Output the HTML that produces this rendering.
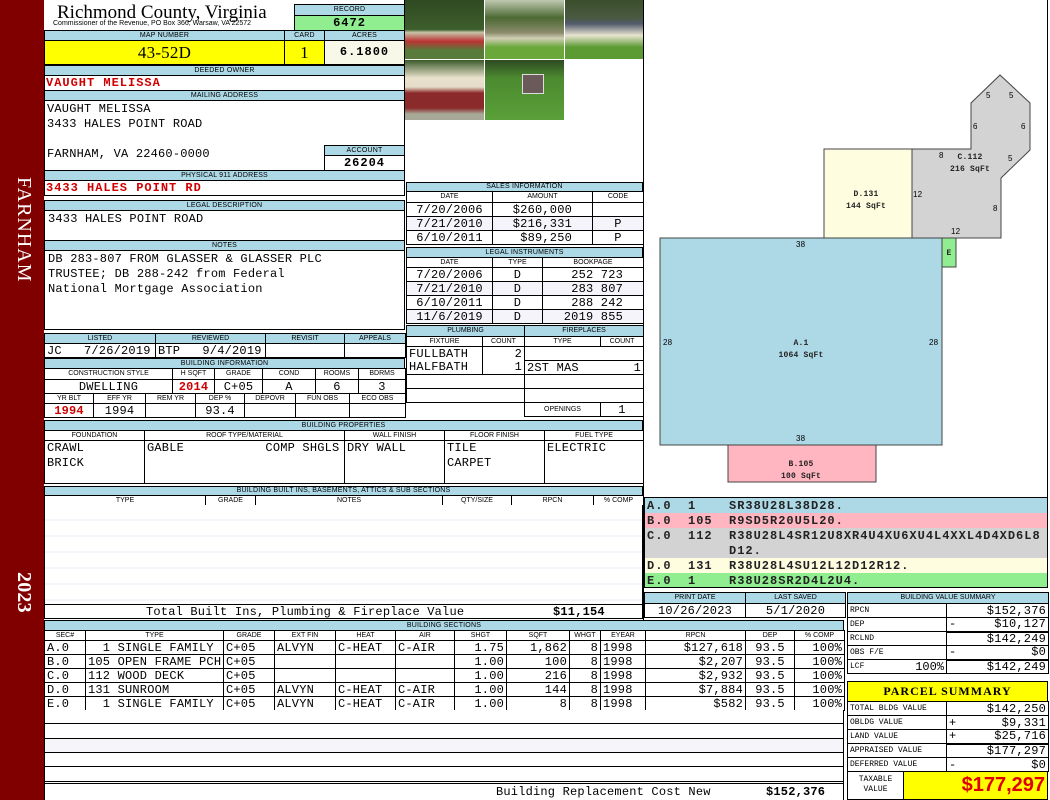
<!DOCTYPE html>
<html><head><meta charset="utf-8"><style>
*{margin:0;padding:0;box-sizing:border-box}
body{width:1050px;height:800px;position:relative;background:#fff;overflow:hidden;font-family:"Liberation Mono",monospace;font-size:12px;letter-spacing:.2px;color:#000}
.a{position:absolute}
.L{position:absolute;background:#add8e6;border:1px solid #000;font:7px/9px "Liberation Sans",sans-serif;text-align:center;letter-spacing:.2px}
table{position:absolute;border-collapse:collapse;table-layout:fixed}
td{border:1px solid #000;padding:0 2px;white-space:nowrap;overflow:hidden;line-height:12px}
td.h{font:7px/8px "Liberation Sans",sans-serif;text-align:center;background:#fff;letter-spacing:0}
tr.hb td{background:#add8e6}
.r{text-align:right}.c{text-align:center}
.red{color:#d00000;font-weight:bold}
.rot{position:absolute;color:#fff;font:20px "Liberation Serif",serif;transform:rotate(90deg);transform-origin:0 0;white-space:nowrap}
.sm{font-size:8px;letter-spacing:0}
</style></head><body>
<div class="a" style="left:0;top:0;width:44px;height:800px;background:#800000"></div>
<div class="rot" style="left:35px;top:177px;letter-spacing:1px">FARNHAM</div>
<div class="rot" style="left:35px;top:572px;font-weight:bold">2023</div>

<div class="a" style="left:57px;top:2px;font:19px 'Liberation Serif',serif;letter-spacing:0">Richmond County, Virginia</div>
<div class="a" style="left:53px;top:20px;font:7px 'Liberation Sans',sans-serif;letter-spacing:0">Commissioner of the Revenue, PO Box 366, Warsaw, VA 22572</div>
<div class="L" style="left:294px;top:4px;width:111px;height:12px">RECORD</div>
<div class="a c" style="left:294px;top:15px;width:111px;height:16px;background:#90ee90;border:1px solid #000;font-weight:bold;font-size:12px;line-height:14px;letter-spacing:1px">6472</div>
<div class="L" style="left:44px;top:30px;width:241px;height:11px">MAP NUMBER</div>
<div class="L" style="left:284px;top:30px;width:41px;height:11px">CARD</div>
<div class="L" style="left:324px;top:30px;width:81px;height:11px">ACRES</div>
<div class="a c" style="left:44px;top:40px;width:241px;height:25px;background:#ffff00;border:1px solid #000;font:17px/23px 'Liberation Serif',serif">43-52D</div>
<div class="a c" style="left:284px;top:40px;width:41px;height:25px;background:#ffff00;border:1px solid #000;font:17px/23px 'Liberation Serif',serif">1</div>
<div class="a c" style="left:324px;top:40px;width:81px;height:25px;background:#f8f8e8;border:1px solid #000;font-weight:bold;font-size:12px;line-height:23px;letter-spacing:1px">6.1800</div>
<div class="L" style="left:44px;top:65px;width:361px;height:11px">DEEDED OWNER</div>
<div class="a red" style="left:46px;top:76px;font-size:12px;letter-spacing:1px">VAUGHT MELISSA</div>
<div class="a" style="left:44px;top:75px;width:361px;height:16px;border:1px solid #000;border-top:0"></div>
<div class="L" style="left:44px;top:90px;width:361px;height:11px">MAILING ADDRESS</div>
<div class="a" style="left:44px;top:100px;width:361px;height:71px;border:1px solid #000;border-top:0"></div>
<div class="a" style="left:47px;top:102px;line-height:15px">VAUGHT MELISSA<br>3433 HALES POINT ROAD<br><br>FARNHAM, VA 22460-0000</div>
<div class="L" style="left:324px;top:145px;width:81px;height:11px">ACCOUNT</div>
<div class="a c" style="left:324px;top:155px;width:81px;height:16px;border:1px solid #000;font-weight:bold;font-size:12px;letter-spacing:1px">26204</div>
<div class="L" style="left:44px;top:170px;width:361px;height:11px">PHYSICAL 911 ADDRESS</div>
<div class="a" style="left:44px;top:180px;width:361px;height:16px;border:1px solid #000;border-top:0"></div>
<div class="a red" style="left:46px;top:181px;font-size:12px;letter-spacing:1px">3433 HALES POINT RD</div>
<div class="L" style="left:44px;top:200px;width:361px;height:11px">LEGAL DESCRIPTION</div>
<div class="a" style="left:44px;top:210px;width:361px;height:31px;border:1px solid #000;border-top:0;padding:2px 3px">3433 HALES POINT ROAD</div>
<div class="L" style="left:44px;top:240px;width:361px;height:11px">NOTES</div>
<div class="a" style="left:44px;top:250px;width:361px;height:80px;border:1px solid #000;border-top:0;padding:2px 3px;line-height:15px">DB 283-807 FROM GLASSER &amp; GLASSER PLC<br>TRUSTEE; DB 288-242 from Federal<br>National Mortgage Association</div>

<table style="left:44px;top:333px;width:361px">
<col style="width:111px"><col style="width:110px"><col style="width:79px"><col style="width:61px">
<tr class="hb" style="height:10px"><td class="h" style="background:#add8e6">LISTED</td><td class="h" style="background:#add8e6">REVIEWED</td><td class="h" style="background:#add8e6">REVISIT</td><td class="h" style="background:#add8e6">APPEALS</td></tr>
<tr style="height:14px"><td>JC&nbsp;&nbsp;&nbsp;7/26/2019</td><td>BTP&nbsp;&nbsp;&nbsp;9/4/2019</td><td></td><td></td></tr></table>

<div class="L" style="left:44px;top:358px;width:361px;height:11px">BUILDING INFORMATION</div>
<table style="left:44px;top:368px;width:361px">
<col style="width:128px"><col style="width:42px"><col style="width:48px"><col style="width:53px"><col style="width:43px"><col style="width:47px">
<tr style="height:11px"><td class="h">CONSTRUCTION STYLE</td><td class="h">H SQFT</td><td class="h">GRADE</td><td class="h">COND</td><td class="h">ROOMS</td><td class="h">BDRMS</td></tr>
<tr style="height:14px"><td class="c">DWELLING</td><td class="c red">2014</td><td class="c">C+05</td><td class="c">A</td><td class="c">6</td><td class="c">3</td></tr></table>
<table style="left:44px;top:393px;width:361px">
<col style="width:49px"><col style="width:52px"><col style="width:50px"><col style="width:49px"><col style="width:51px"><col style="width:54px"><col style="width:56px">
<tr style="height:10px"><td class="h">YR BLT</td><td class="h">EFF YR</td><td class="h">REM YR</td><td class="h">DEP %</td><td class="h">DEPOVR</td><td class="h">FUN OBS</td><td class="h">ECO OBS</td></tr>
<tr style="height:14px"><td class="c red">1994</td><td class="c">1994</td><td></td><td class="c">93.4</td><td></td><td></td><td></td></tr></table>

<div class="L" style="left:44px;top:420px;width:599px;height:11px">BUILDING PROPERTIES</div>
<table style="left:44px;top:430px;width:599px">
<col style="width:100px"><col style="width:200px"><col style="width:100px"><col style="width:100px"><col style="width:99px">
<tr style="height:10px"><td class="h">FOUNDATION</td><td class="h">ROOF TYPE/MATERIAL</td><td class="h">WALL FINISH</td><td class="h">FLOOR FINISH</td><td class="h">FUEL TYPE</td></tr>
<tr style="height:43px;vertical-align:top"><td style="line-height:15px">CRAWL<br>BRICK</td><td style="line-height:15px">GABLE&nbsp;&nbsp;&nbsp;&nbsp;&nbsp;&nbsp;&nbsp;&nbsp;&nbsp;&nbsp;&nbsp;COMP SHGLS</td><td style="line-height:15px">DRY WALL</td><td style="line-height:15px">TILE<br>CARPET</td><td style="line-height:15px">ELECTRIC</td></tr></table>

<div class="L" style="left:44px;top:486px;width:599px;height:10px;line-height:8px">BUILDING BUILT INS, BASEMENTS, ATTICS &amp; SUB SECTIONS</div>
<table style="left:44px;top:495px;width:599px">
<col style="width:161px"><col style="width:50px"><col style="width:187px"><col style="width:69px"><col style="width:82px"><col style="width:50px">
<tr style="height:10px"><td class="h">TYPE</td><td class="h">GRADE</td><td class="h">NOTES</td><td class="h">QTY/SIZE</td><td class="h">RPCN</td><td class="h">% COMP</td></tr></table>
<div class="a" style="left:44px;top:505px;width:599px;height:100px;border-left:1px solid #000;border-right:1px solid #000;background:repeating-linear-gradient(#fff 0 14px,#f4f4fa 14px 16px)"></div>
<div class="a" style="left:44px;top:604px;width:599px;height:15px;border:1px solid #000"></div>
<div class="a" style="left:146px;top:605px">Total Built Ins, Plumbing &amp; Fireplace Value</div>
<div class="a" style="left:553px;top:605px;font-weight:bold">$11,154</div>

<div class="L" style="left:44px;top:620px;width:800px;height:11px">BUILDING SECTIONS</div>
<table style="left:44px;top:630px;width:800px">
<col style="width:41px"><col style="width:138px"><col style="width:51px"><col style="width:61px"><col style="width:60px"><col style="width:59px"><col style="width:52px"><col style="width:63px"><col style="width:31px"><col style="width:45px"><col style="width:100px"><col style="width:49px"><col style="width:50px">
<tr style="height:10px"><td class="h">SEC#</td><td class="h">TYPE</td><td class="h">GRADE</td><td class="h">EXT FIN</td><td class="h">HEAT</td><td class="h">AIR</td><td class="h">SHGT</td><td class="h">SQFT</td><td class="h">WHGT</td><td class="h">EYEAR</td><td class="h">RPCN</td><td class="h">DEP</td><td class="h">% COMP</td></tr>
<tr style="height:14px"><td>A.0</td><td>&nbsp;&nbsp;1 SINGLE FAMILY</td><td>C+05</td><td>ALVYN</td><td>C-HEAT</td><td>C-AIR</td><td class="r">1.75</td><td class="r">1,862</td><td class="r">8</td><td>1998</td><td class="r">$127,618</td><td class="c">93.5</td><td class="r">100%</td></tr>
<tr style="height:14px"><td>B.0</td><td>105 OPEN FRAME PCH</td><td>C+05</td><td></td><td></td><td></td><td class="r">1.00</td><td class="r">100</td><td class="r">8</td><td>1998</td><td class="r">$2,207</td><td class="c">93.5</td><td class="r">100%</td></tr>
<tr style="height:14px"><td>C.0</td><td>112 WOOD DECK</td><td>C+05</td><td></td><td></td><td></td><td class="r">1.00</td><td class="r">216</td><td class="r">8</td><td>1998</td><td class="r">$2,932</td><td class="c">93.5</td><td class="r">100%</td></tr>
<tr style="height:14px"><td>D.0</td><td>131 SUNROOM</td><td>C+05</td><td>ALVYN</td><td>C-HEAT</td><td>C-AIR</td><td class="r">1.00</td><td class="r">144</td><td class="r">8</td><td>1998</td><td class="r">$7,884</td><td class="c">93.5</td><td class="r">100%</td></tr>
<tr style="height:14px"><td>E.0</td><td>&nbsp;&nbsp;1 SINGLE FAMILY</td><td>C+05</td><td>ALVYN</td><td>C-HEAT</td><td>C-AIR</td><td class="r">1.00</td><td class="r">8</td><td class="r">8</td><td>1998</td><td class="r">$582</td><td class="c">93.5</td><td class="r">100%</td></tr>
</table>
<div class="a" style="left:44px;top:710px;width:800px;height:90px;border-left:1px solid #000;border-right:1px solid #000;background:repeating-linear-gradient(#fff 0 13px,#000 13px 14px,#fff 14px 28px,#000 28px 29px,#f6f6fa 29px 42px,#000 42px 43px)"></div>
<div class="a" style="left:44px;top:783px;width:800px;height:17px;background:#fff;border:1px solid #000;border-bottom:0"></div>
<div class="a" style="left:496px;top:785px">Building Replacement Cost New</div>
<div class="a" style="left:766px;top:785px;font-weight:bold">$152,376</div>

<div class="a" style="left:405px;top:0;width:79px;height:59px;background:linear-gradient(#2f4a22 0,#3d5e2c 50%,#c8c4a8 55%,#b33 70%,#587a3a 85%)"></div>
<div class="a" style="left:485px;top:0;width:79px;height:59px;background:linear-gradient(#c0c8b0,#4c6a34 30%,#8a8a6a 55%,#d0ceb4 65%,#6aa83a 80%)"></div>
<div class="a" style="left:565px;top:0;width:79px;height:59px;background:linear-gradient(#3a4e2c,#4a5a40 30%,#505a6a 40%,#e8e4d0 60%,#5c9a34 80%)"></div>
<div class="a" style="left:405px;top:60px;width:79px;height:60px;background:linear-gradient(#3a5a2a,#eae2cc 30%,#e4dcc8 45%,#8a2a2a 55%,#8a2a2a 80%,#a8a898 90%)"></div>
<div class="a" style="left:485px;top:60px;width:79px;height:60px;background:linear-gradient(#2e4a22,#4c8a30 30%,#5aa038)"></div>
<div class="a" style="left:522px;top:74px;width:22px;height:20px;background:#6a5a5a;border:1px solid #ddd"></div>
<div class="a" style="left:643px;top:0;width:1px;height:620px;background:#000"></div>
<div class="a" style="left:1047px;top:0;width:1px;height:497px;background:#000"></div>
<div class="a" style="left:404px;top:0;width:1px;height:182px;background:#000"></div>

<div class="L" style="left:406px;top:182px;width:237px;height:10px;line-height:8px">SALES INFORMATION</div>
<table style="left:406px;top:191px;width:237px">
<col style="width:86px"><col style="width:100px"><col style="width:51px">
<tr style="height:11px"><td class="h">DATE</td><td class="h">AMOUNT</td><td class="h">CODE</td></tr>
<tr style="height:14px"><td class="c">7/20/2006</td><td class="r" style="padding-right:20px">$260,000</td><td></td></tr>
<tr style="height:14px;background:#f4f4fa"><td class="c">7/21/2010</td><td class="r" style="padding-right:20px">$216,331</td><td class="c">P</td></tr>
<tr style="height:14px"><td class="c">6/10/2011</td><td class="r" style="padding-right:20px">$89,250</td><td class="c">P</td></tr></table>
<div class="L" style="left:406px;top:247px;width:237px;height:11px">LEGAL INSTRUMENTS</div>
<table style="left:406px;top:257px;width:237px">
<col style="width:86px"><col style="width:50px"><col style="width:101px">
<tr style="height:10px"><td class="h">DATE</td><td class="h">TYPE</td><td class="h">BOOKPAGE</td></tr>
<tr style="height:14px"><td class="c">7/20/2006</td><td class="c">D</td><td class="r" style="padding-right:20px">252 723</td></tr>
<tr style="height:14px;background:#f4f4fa"><td class="c">7/21/2010</td><td class="c">D</td><td class="r" style="padding-right:20px">283 807</td></tr>
<tr style="height:14px"><td class="c">6/10/2011</td><td class="c">D</td><td class="r" style="padding-right:20px">288 242</td></tr>
<tr style="height:14px;background:#f4f4fa"><td class="c">11/6/2019</td><td class="c">D</td><td class="r" style="padding-right:20px">2019 855</td></tr></table>

<table style="left:406px;top:325px;width:237px">
<col style="width:76px"><col style="width:42px"><col style="width:76px"><col style="width:43px">
<tr style="height:11px"><td class="h" colspan="2" style="background:#add8e6">PLUMBING</td><td class="h" colspan="2" style="background:#add8e6">FIREPLACES</td></tr>
<tr style="height:10px"><td class="h">FIXTURE</td><td class="h">COUNT</td><td class="h">TYPE</td><td class="h">COUNT</td></tr>
<tr style="height:14px"><td style="border-bottom:0">FULLBATH</td><td class="r" style="border-left:0;border-bottom:0">2</td><td colspan="2"></td></tr>
<tr style="height:14px"><td style="border-top:0">HALFBATH</td><td class="r" style="border-left:0;border-top:0">1</td><td style="border-right:0">2ST MAS</td><td class="r" style="border-left:0">1</td></tr>
<tr style="height:14px"><td colspan="2"></td><td colspan="2"></td></tr>
<tr style="height:14px"><td colspan="2"></td><td colspan="2"></td></tr>
<tr style="height:14px"><td colspan="2" style="border:0;border-right:1px solid #000"></td><td class="h">OPENINGS</td><td class="c">1</td></tr></table>

<svg class="a" style="left:644px;top:0" width="406" height="497" viewBox="644 0 406 497">
<g stroke="#444" stroke-width="1" font-family="Liberation Mono,monospace" font-size="8" font-weight="bold">
<polygon points="912,149 971,149 971,103 1000,75 1030,103 1030,150 1001,178 1001,238 912,238" fill="#d3d3d3"/>
<rect x="824" y="149" width="88" height="89" fill="#fffde0"/>
<rect x="660" y="238" width="282" height="207" fill="#add8e6"/>
<rect x="728" y="445" width="148" height="37" fill="#ffb6c1"/>
<rect x="942" y="238" width="14" height="29" fill="#90ee90"/>
<g stroke="none" fill="#000" font-family="Liberation Sans,sans-serif" font-weight="normal">
<text x="986" y="98">5</text><text x="1009" y="98">5</text><text x="973" y="129">6</text><text x="1021" y="129">6</text><text x="1008" y="161">5</text><text x="939" y="158">8</text><text x="993" y="211">8</text><text x="913" y="197">12</text><text x="951" y="234">12</text><text x="796" y="247">38</text><text x="796" y="441">38</text><text x="663" y="345">28</text><text x="929" y="345">28</text></g>
<g stroke="none" fill="#222" text-anchor="middle">
<text x="970" y="159">C.112</text><text x="970" y="171">216 SqFt</text>
<text x="866" y="196">D.131</text><text x="866" y="208">144 SqFt</text>
<text x="801" y="345">A.1</text><text x="801" y="357">1064 SqFt</text>
<text x="801" y="466">B.105</text><text x="801" y="478">100 SqFt</text>
<text x="949" y="255">E</text></g></g></svg>

<div class="a" style="left:644px;top:497px;width:404px;height:91px;border:1px solid #000;font-weight:bold;font-size:12px;letter-spacing:1px;color:#222">
<div style="height:15px;background:#add8e6;position:relative"><span class="a" style="left:2px;top:1px">A.0</span><span class="a" style="left:43px;top:1px">1</span><span class="a" style="left:84px;top:1px">SR38U28L38D28.</span></div>
<div style="height:15px;background:#ffb6c1;position:relative"><span class="a" style="left:2px;top:1px">B.0</span><span class="a" style="left:43px;top:1px">105</span><span class="a" style="left:84px;top:1px">R9SD5R20U5L20.</span></div>
<div style="height:30px;background:#d3d3d3;position:relative"><span class="a" style="left:2px;top:1px">C.0</span><span class="a" style="left:43px;top:1px">112</span><span class="a" style="left:84px;top:1px;line-height:15px">R38U28L4SR12U8XR4U4XU6XU4L4XXL4D4XD6L8<br>D12.</span></div>
<div style="height:15px;background:#fffde0;position:relative"><span class="a" style="left:2px;top:1px">D.0</span><span class="a" style="left:43px;top:1px">131</span><span class="a" style="left:84px;top:1px">R38U28L4SU12L12D12R12.</span></div>
<div style="height:14px;background:#90ee90;position:relative"><span class="a" style="left:2px;top:1px">E.0</span><span class="a" style="left:43px;top:1px">1</span><span class="a" style="left:84px;top:1px">R38U28SR2D4L2U4.</span></div></div>

<table style="left:644px;top:592px;width:201px">
<col style="width:101px"><col style="width:100px">
<tr style="height:11px"><td class="h" style="background:#add8e6">PRINT DATE</td><td class="h" style="background:#add8e6">LAST SAVED</td></tr>
<tr style="height:14px"><td class="c">10/26/2023</td><td class="c">5/1/2020</td></tr></table>

<table style="left:847px;top:592px;width:201px">
<col style="width:99px"><col style="width:102px">
<tr style="height:11px"><td class="h" colspan="2" style="background:#add8e6">BUILDING VALUE SUMMARY</td></tr>
<tr style="height:14px"><td class="sm">RPCN</td><td class="r">$152,376</td></tr>
<tr style="height:14px"><td class="sm">DEP</td><td class="r" style="border-bottom:2px solid #000"><span style="float:left">-</span>$10,127</td></tr>
<tr style="height:14px"><td class="sm">RCLND</td><td class="r">$142,249</td></tr>
<tr style="height:14px"><td class="sm">OBS F/E</td><td class="r" style="border-bottom:2px solid #000"><span style="float:left">-</span>$0</td></tr>
<tr style="height:14px"><td class="sm">LCF<span style="float:right;font-size:12px">100%</span></td><td class="r">$142,249</td></tr></table>

<div class="a" style="left:847px;top:681px;width:201px;height:21px;background:#ffff00;border:1px solid #000;text-align:center;font:bold 12px/19px 'Liberation Serif',serif;letter-spacing:1px">PARCEL SUMMARY</div>
<table style="left:847px;top:701px;width:201px">
<col style="width:99px"><col style="width:102px">
<tr style="height:14px"><td class="sm">TOTAL BLDG VALUE</td><td class="r">$142,250</td></tr>
<tr style="height:14px"><td class="sm">OBLDG VALUE</td><td class="r"><span style="float:left">+</span>$9,331</td></tr>
<tr style="height:14px"><td class="sm">LAND VALUE</td><td class="r" style="border-bottom:2px solid #000"><span style="float:left">+</span>$25,716</td></tr>
<tr style="height:14px"><td class="sm">APPRAISED VALUE</td><td class="r">$177,297</td></tr>
<tr style="height:14px"><td class="sm">DEFERRED VALUE</td><td class="r"><span style="float:left">-</span>$0</td></tr></table>
<div class="a" style="left:847px;top:771px;width:57px;height:29px;border:1px solid #000;font-size:8px;letter-spacing:0;line-height:10px;text-align:center;padding-top:3px">TAXABLE<br>VALUE</div>
<div class="a" style="left:903px;top:771px;width:145px;height:29px;background:#ffff00;border:1px solid #000;color:#e00000;font:bold 20px/27px 'Liberation Sans',sans-serif;letter-spacing:0;text-align:right;padding-right:2px">$177,297</div>
</body></html>
